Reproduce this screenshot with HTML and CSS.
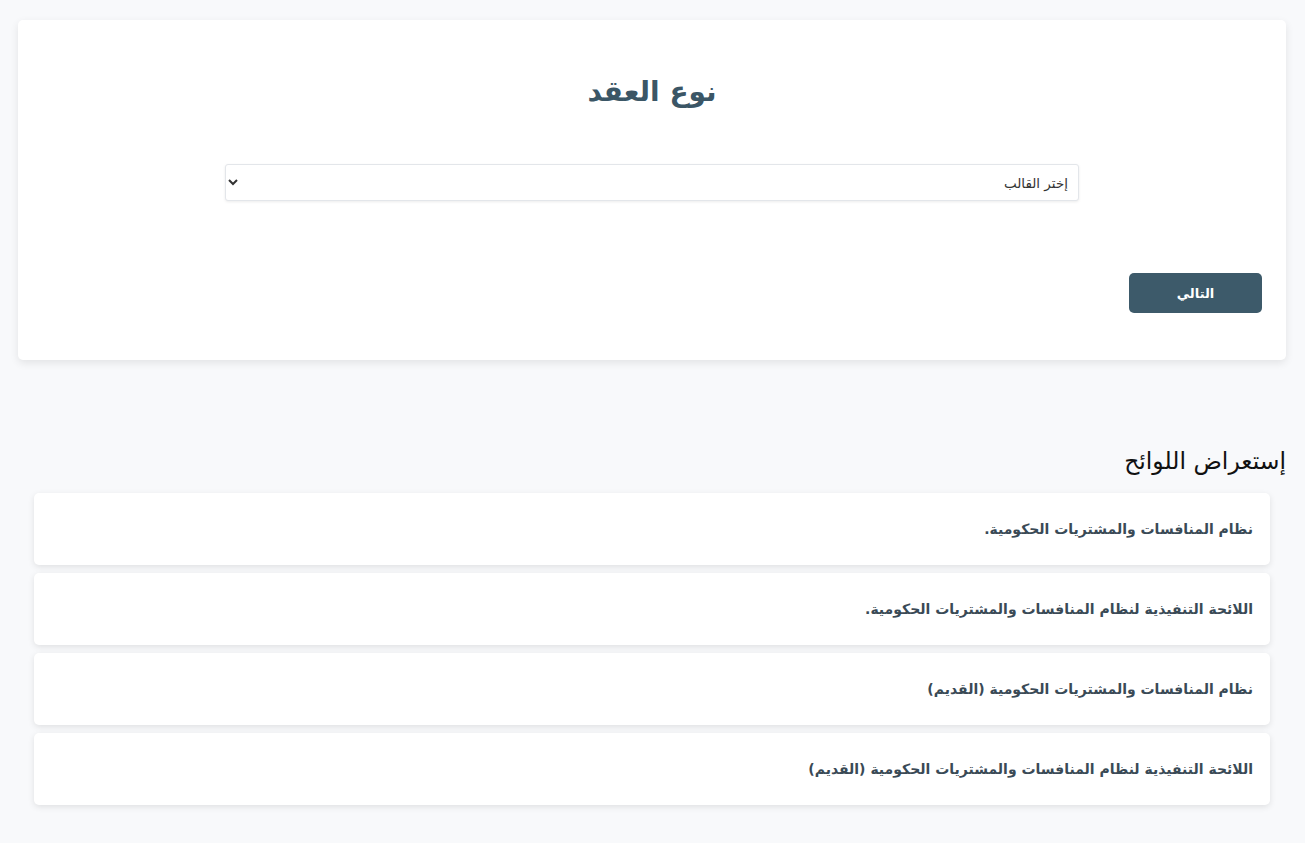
FILE: index.html
```html
<!DOCTYPE html>
<html lang="ar" dir="rtl">
<head>
    <meta charset="UTF-8">
    <meta name="viewport" content="width=device-width, initial-scale=1.0">
    <title>نوع العقد</title>
    <link rel="stylesheet" href="styles.css">
</head>
<body>
    <div class="page">
        <div class="contract-card">
            <h1 class="contract-title">نوع العقد</h1>
            <div class="select-row">
                <select class="template-select">
                    <option>إختر القالب</option>
                </select>
            </div>
            <div class="actions">
                <button class="btn-next">التالي</button>
            </div>
        </div>

        <div class="regulations">
            <h2 class="regulations-title">إستعراض اللوائح</h2>
            <div class="reg-list">
                <div class="reg-item">نظام المنافسات والمشتريات الحكومية.</div>
                <div class="reg-item">اللائحة التنفيذية لنظام المنافسات والمشتريات الحكومية.</div>
                <div class="reg-item">نظام المنافسات والمشتريات الحكومية (القديم)</div>
                <div class="reg-item">اللائحة التنفيذية لنظام المنافسات والمشتريات الحكومية (القديم)</div>
            </div>
        </div>
    </div>
</body>
</html>
```

FILE: styles.css
```css
html, body {
    margin: 0;
    padding: 0;
}
body {
    font-family: "DejaVu Sans", "Noto Sans", sans-serif;
    background: #f8f9fb;
    color: #222;
}
.page {
    padding: 20px 19px 38px 18px;
}
.contract-card {
    background: #fff;
    border-radius: 5px;
    box-shadow: 0 3px 9px rgba(0,0,0,0.09);
    padding: 24px 24px 47px;
}
.contract-title {
    margin: 24px 0 0;
    text-align: center;
    font-size: 28px;
    line-height: 48px;
    font-weight: bold;
    color: #3b5666;
}
.select-row {
    display: flex;
    justify-content: center;
    margin-top: 48px;
}
.template-select {
    width: 854px;
    height: 37px;
    border: 1px solid #e3e6ea;
    border-radius: 3px;
    background: #fff;
    box-shadow: 0 1px 3px rgba(0,0,0,0.08);
    font-family: "DejaVu Sans", sans-serif;
    font-size: 13.5px;
    color: #333;
    padding: 0 6px;
}
.actions {
    display: flex;
    justify-content: flex-start;
    margin-top: 72px;
}
.btn-next {
    width: 133px;
    height: 40px;
    border: none;
    border-radius: 5px;
    background: #3d5a6a;
    color: #fff;
    font-family: "DejaVu Sans", sans-serif;
    font-size: 13px;
    font-weight: bold;
}
.regulations {
    margin-top: 83px;
}
.regulations-title {
    margin: 0;
    font-size: 23.5px;
    line-height: 36px;
    font-weight: normal;
    color: #111;
}
.reg-list {
    margin: 14px 16px 0;
    display: flex;
    flex-direction: column;
    gap: 8px;
}
.reg-item {
    background: #fff;
    border-radius: 5px;
    box-shadow: 0 2px 6px rgba(0,0,0,0.1);
    padding: 24px 17px;
    line-height: 24px;
    font-size: 14px;
    font-weight: bold;
    color: #3a4a56;
}
```
